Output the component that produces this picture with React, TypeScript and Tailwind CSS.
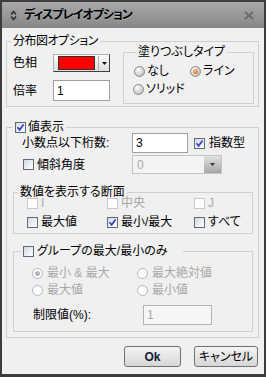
import React from 'react';

type BoxProps = { checked?: boolean; disabled?: boolean };

const CheckBox: React.FC<BoxProps> = ({ checked, disabled }) => (
  <span
    className={
      disabled
        ? 'flex h-[11px] w-[11px] shrink-0 border border-[#c8c8c8] bg-white'
        : 'flex h-[11px] w-[11px] shrink-0 items-center justify-center border border-[#5f6b78] bg-linear-to-br from-[#d4d8e0] to-white'
    }
  >
    {checked && (
      <svg width="9" height="9" viewBox="0 0 9 9">
        <path d="M1.5 4.3 L3.6 6.8 L7.6 1.6" fill="none" stroke="#3340c4" strokeWidth="1.7" />
      </svg>
    )}
  </span>
);

const Radio: React.FC<BoxProps> = ({ checked, disabled }) => (
  <span
    className={
      disabled
        ? 'flex h-[11px] w-[11px] shrink-0 items-center justify-center rounded-full border border-[#aab4c8] bg-white'
        : 'flex h-[11px] w-[11px] shrink-0 items-center justify-center rounded-full border border-[#8a8a8a] bg-[radial-gradient(circle_at_35%_30%,#ffffff,#b0b0b0)]'
    }
  >
    {checked && (
      <span
        className={
          disabled
            ? 'h-[5px] w-[5px] rounded-full bg-[#b4b4b4]'
            : 'h-[5px] w-[5px] rounded-full bg-[radial-gradient(circle_at_40%_35%,#ffc080,#e8501a)]'
        }
      />
    )}
  </span>
);

export default function App() {
  return (
    <div className="flex h-[377px] w-[266px] flex-col bg-[#3d3d3d] p-[2px] pb-[3px] font-['Liberation_Sans','Noto_Sans_CJK_JP',sans-serif] text-[12px] leading-[14px] text-black [font-feature-settings:'palt']">
      {/* title bar */}
      <div className="flex h-[26px] shrink-0 items-center bg-linear-to-b from-[#a9a9a9] to-[#878787] pl-[8px] pr-[10px]">
        <svg width="7" height="11" viewBox="0 0 7 11">
          <path d="M1 4.5 L3.5 1.5 L6 4.5 M1 6.5 L3.5 9.5 L6 6.5" fill="none" stroke="#2e2e2e" strokeWidth="1.5" />
        </svg>
        <span className="ml-[7px] font-bold tracking-[-1px] [text-shadow:0_1px_0_rgba(255,255,255,0.25)]">ディスプレイオプション</span>
        <svg className="ml-auto" width="10" height="9" viewBox="0 0 10 9">
          <path d="M1 1 L9 8 M9 1 L1 8" stroke="#6c6c6c" strokeWidth="2" />
        </svg>
      </div>

      {/* body */}
      <div className="flex flex-1 flex-col bg-[#f0f0f0] pl-[4px] pr-[5px]">
        <fieldset className="mt-[6px] border border-[#d0d0d0] pb-[2px]">
          <legend className="ml-[4px] px-[2px] tracking-[-0.5px]">分布図オプション</legend>
          <div className="flex items-start">
            <div className="flex flex-col pl-[6px]">
              <div className="mt-[6px] flex h-[18px] items-center">
                <span className="w-[40px]">色相</span>
                <div className="flex h-[18px] w-[57px] items-center border border-[#b0b0b0] border-r-[#404040] border-b-[#404040] bg-linear-to-b from-[#fbfbfb] to-[#dedede] pl-[4px]">
                  <span className="h-[14px] w-[37px] border border-[#303030] bg-[#ff0000]" />
                  <span className="ml-[3px] h-[14px] w-px bg-[#b0b0b0]" />
                  <svg className="ml-[3px]" width="5" height="3" viewBox="0 0 5 3">
                    <path d="M0 0 H5 L2.5 3 Z" fill="#111" />
                  </svg>
                </div>
              </div>
              <div className="mt-[8px] flex h-[21px] items-center">
                <span className="w-[40px]">倍率</span>
                <div className="flex h-[21px] w-[57px] items-center border border-[#a0a0a0] bg-white pl-[3px]">1</div>
              </div>
            </div>
            <fieldset className="-mt-[3px] ml-[13px] w-[131px] border border-[#d0d0d0] pb-[7px]">
              <legend className="ml-[12px] px-[2px]">塗りつぶしタイプ</legend>
              <div className="mt-[5px] flex h-[14px] items-center pl-[10px]">
                <span className="flex w-[56px] items-center gap-[2px]">
                  <Radio />
                  なし
                </span>
                <span className="flex items-center gap-[2px]">
                  <Radio checked />
                  ライン
                </span>
              </div>
              <div className="mt-[4px] flex h-[14px] items-center pl-[9px]">
                <span className="flex items-center gap-[2px]">
                  <Radio />
                  ソリッド
                </span>
              </div>
            </fieldset>
          </div>
        </fieldset>

        <fieldset className="mt-[13px] border border-[#d0d0d0] pb-[5px]">
          <legend className="ml-[6px] px-[2px]">
            <span className="flex items-center gap-[2px]">
              <CheckBox checked />
              値表示
            </span>
          </legend>
          <div className="-mt-[1px] flex h-[20px] items-center pl-[15px]">
            <span className="w-[110px]">小数点以下桁数:</span>
            <div className="flex h-[20px] w-[56px] items-center border border-[#a0a0a0] bg-white pl-[3px]">3</div>
            <span className="ml-[6px] flex items-center gap-[4px]">
              <CheckBox checked />
              指数型
            </span>
          </div>
          <div className="mt-[2px] flex h-[19px] items-center pl-[16px]">
            <span className="flex w-[109px] items-center gap-[3px]">
              <CheckBox />
              傾斜角度
            </span>
            <div className="flex h-[19px] w-[90px] items-center border border-[#c4c4c4] bg-[#f4f4f4]">
              <span className="flex-1 pl-[4px] text-[#a8a8a8]">0</span>
              <span className="flex h-full w-[17px] items-center justify-center bg-linear-to-b from-[#e2e2e2] to-[#a6a6a6]">
                <svg width="5" height="3" viewBox="0 0 5 3">
                  <path d="M0 0 H5 L2.5 3 Z" fill="#333" />
                </svg>
              </span>
            </div>
          </div>

          <fieldset className="ml-[6px] mr-[5px] mt-[13px] border border-[#d0d0d0] pb-[5px]">
            <legend className="ml-[4px] px-[2px] leading-[10px]">数値を表示する断面</legend>
            <div className="mt-[1px] flex h-[11px] items-center pl-[13px] leading-[11px] text-[#a8a8a8]">
              <span className="flex w-[80px] items-center gap-[3px]">
                <CheckBox disabled />I
              </span>
              <span className="flex w-[87px] items-center gap-[3px]">
                <CheckBox disabled />
                中央
              </span>
              <span className="flex items-center gap-[3px]">
                <CheckBox disabled />J
              </span>
            </div>
            <div className="mt-[8px] flex h-[11px] items-center pl-[13px] leading-[11px]">
              <span className="flex w-[80px] items-center gap-[3px]">
                <CheckBox />
                最大値
              </span>
              <span className="flex w-[87px] items-center gap-[3px]">
                <CheckBox checked />
                最小/最大
              </span>
              <span className="flex items-center gap-[3px]">
                <CheckBox />
                すべて
              </span>
            </div>
          </fieldset>

          <fieldset className="ml-[6px] mr-[5px] mt-[10px] border border-[#d0d0d0] pb-[6px]">
            <legend className="ml-[7px] w-[162px] px-[2px]">
              <span className="flex items-center gap-[3px]">
                <CheckBox />
                グループの最大/最小のみ
              </span>
            </legend>
            <div className="mt-[10px] flex h-[11px] items-center pl-[18px] leading-[11px] text-[#a8a8a8]">
              <span className="flex w-[105px] items-center gap-[4px]">
                <Radio checked disabled />
                最小 &amp; 最大
              </span>
              <span className="flex items-center gap-[4px]">
                <Radio disabled />
                最大絶対値
              </span>
            </div>
            <div className="mt-[6px] flex h-[11px] items-center pl-[18px] leading-[11px] text-[#a8a8a8]">
              <span className="flex w-[105px] items-center gap-[4px]">
                <Radio disabled />
                最大値
              </span>
              <span className="flex items-center gap-[4px]">
                <Radio disabled />
                最小値
              </span>
            </div>
            <div className="mt-[9px] flex h-[20px] items-center pl-[19px]">
              <span className="w-[110px]">制限値(%):</span>
              <div className="flex h-[20px] w-[69px] items-center border border-[#b4b4b4] bg-[#f6f6f6] pl-[3px] text-[#a8a8a8]">1</div>
            </div>
          </fieldset>
        </fieldset>

        <div className="mt-[8px] flex justify-end gap-[13px] pr-[1px]">
          <button className="h-[21px] w-[57px] rounded-[3px] border border-[#707070] bg-linear-to-b from-[#f4f4f4] to-[#d6d6d6] font-bold text-[#101838]">
            Ok
          </button>
          <button className="h-[21px] w-[64px] rounded-[3px] border border-[#707070] bg-linear-to-b from-[#f4f4f4] to-[#d6d6d6]">
            キャンセル
          </button>
        </div>
      </div>
    </div>
  );
}
